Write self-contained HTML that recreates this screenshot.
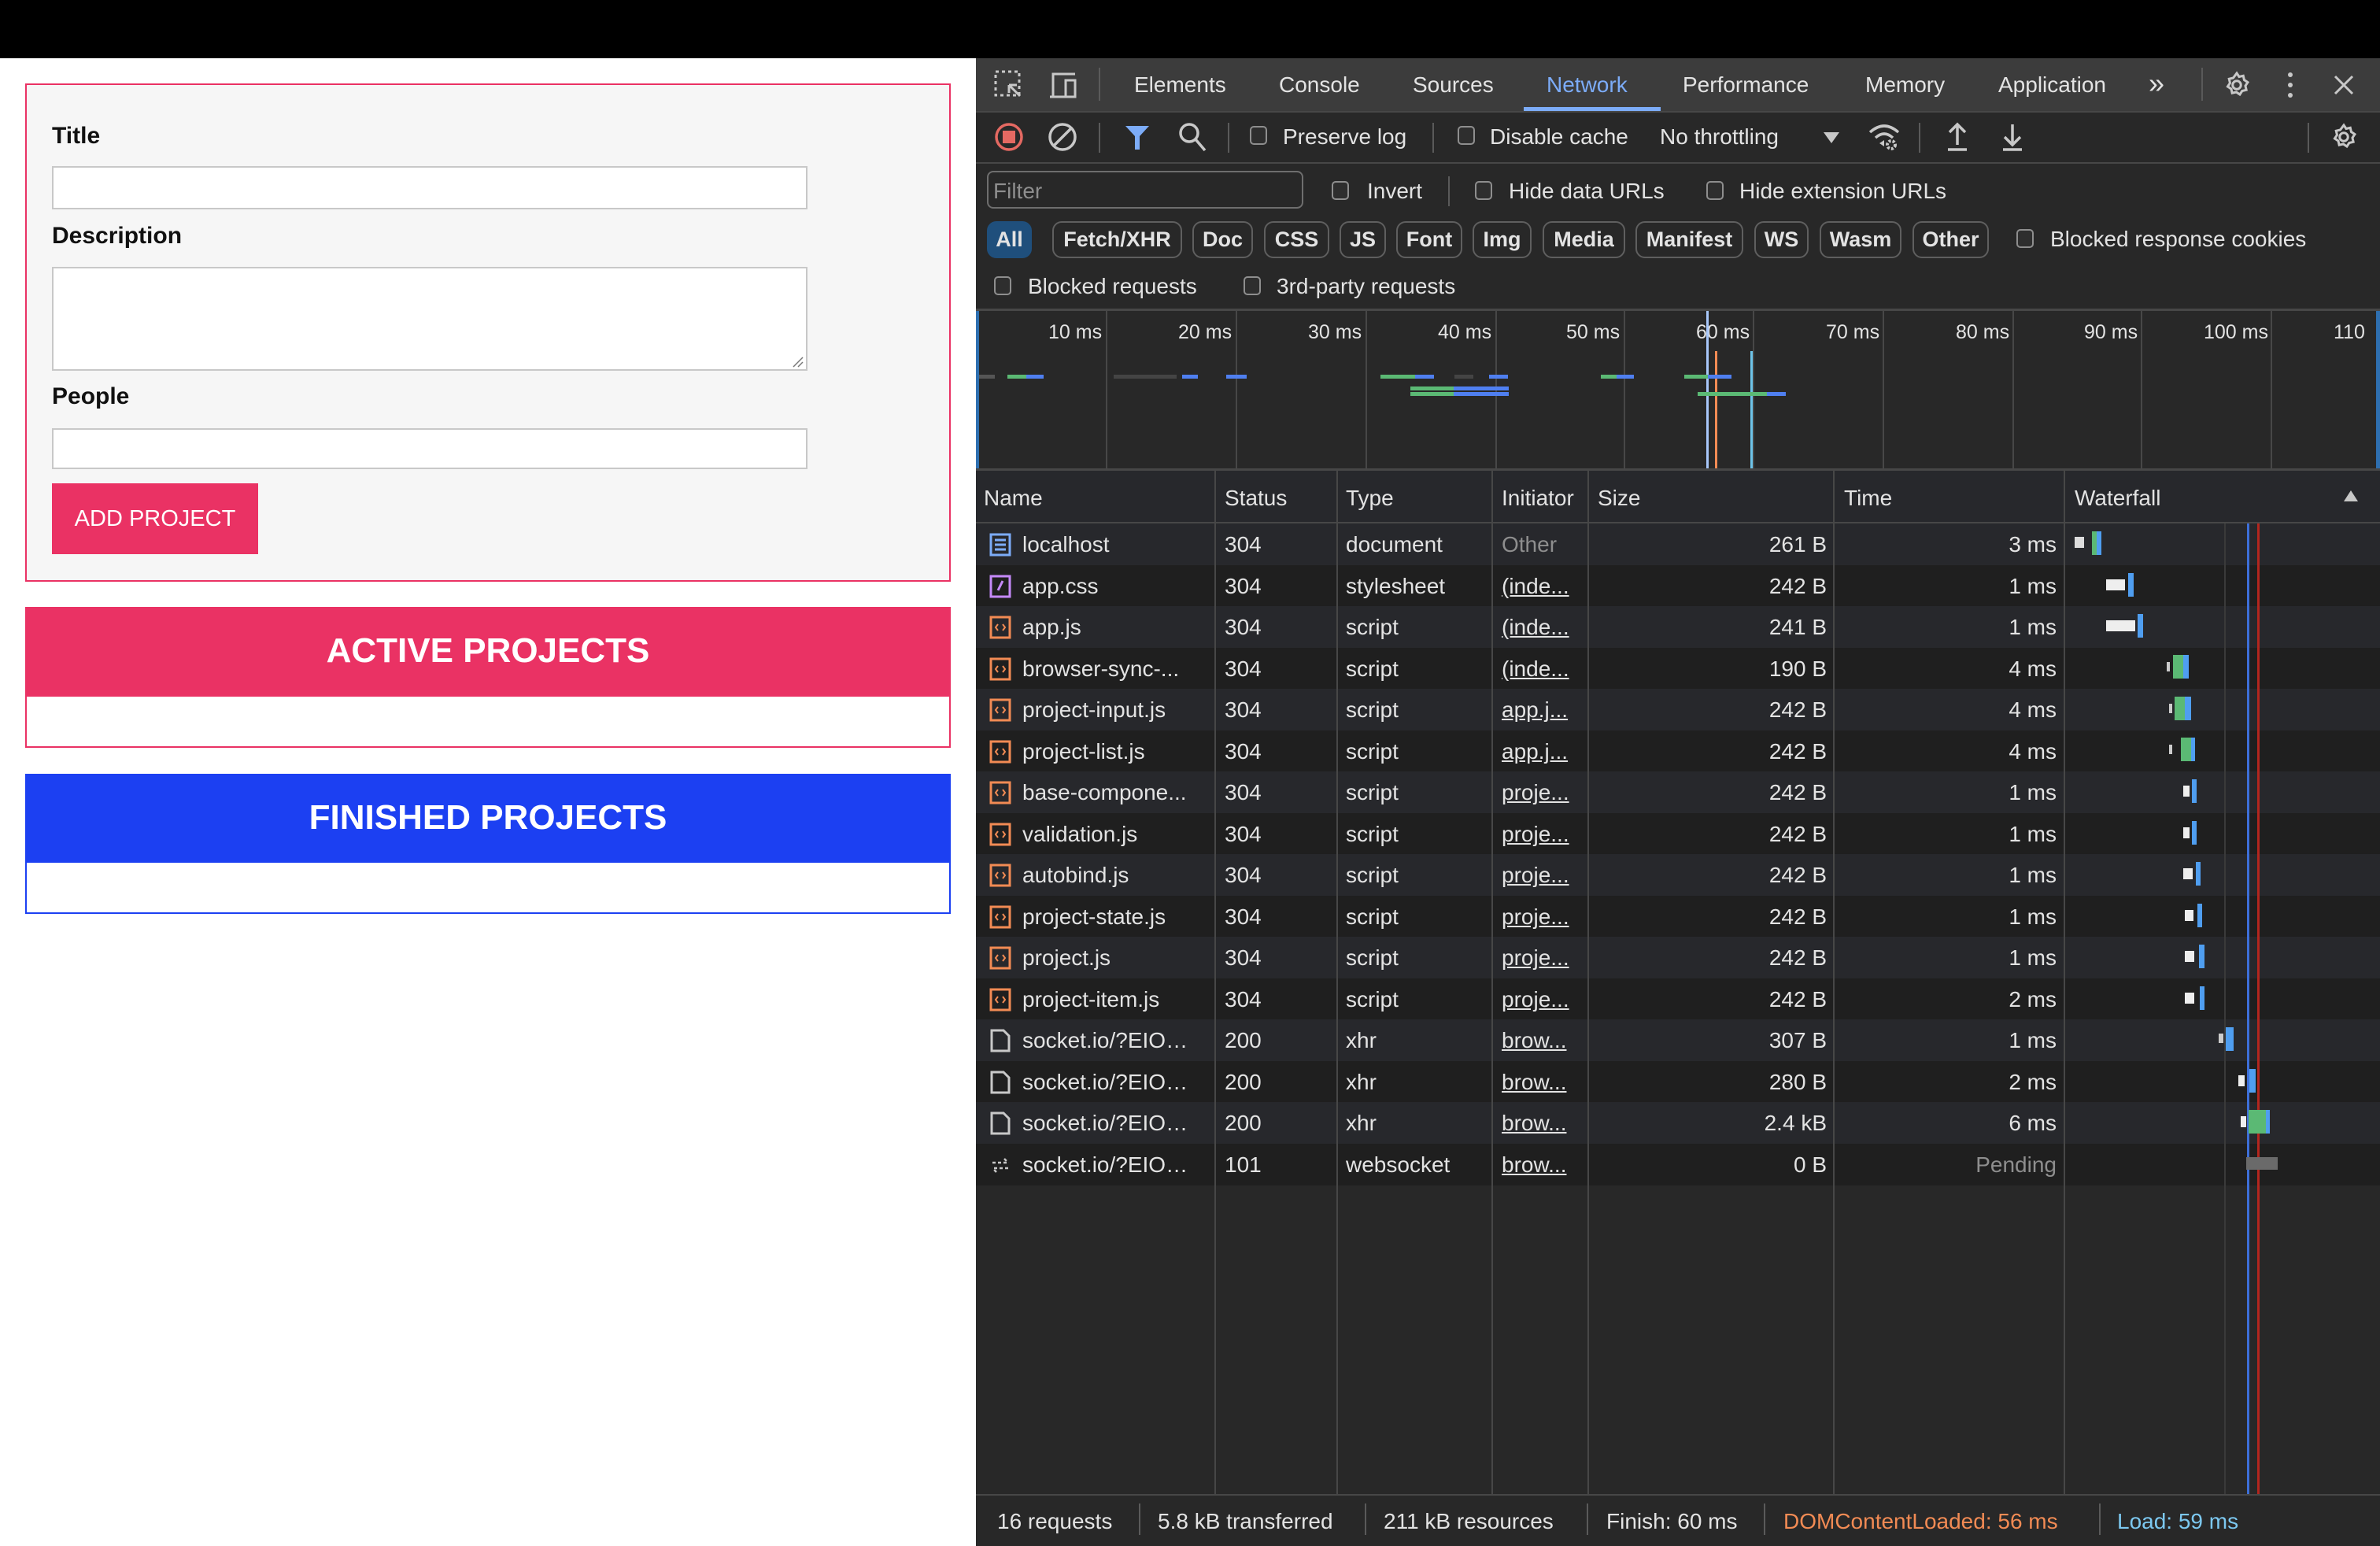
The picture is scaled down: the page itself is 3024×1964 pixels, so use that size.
<!DOCTYPE html>
<html><head><meta charset="utf-8"><style>
*{margin:0;padding:0;box-sizing:border-box}
body{width:3024px;height:1964px;position:relative;overflow:hidden;background:#fff;font-family:"Liberation Sans",Arial,sans-serif}
.a{position:absolute}
#top{left:0;top:0;width:3024px;height:74px;background:#000}
.lbl{position:absolute;left:66px;font-weight:bold;font-size:30px;color:#111;line-height:1}
.inp{position:absolute;left:66px;width:960px;background:#fff;border:2px solid #c8c8c8}
#dt{position:absolute;left:1240px;top:74px;width:1784px;height:1890px;background:#282828;color:#e3e3e3;font-size:28px;overflow:hidden}
.t{position:absolute;white-space:nowrap;line-height:1}
.cb{position:absolute;width:22px;height:24px;border:2px solid #8e8e8e;border-radius:5px;background:#2e2e2e}
.chip{position:absolute;top:207px;height:47px;border:2px solid #5f5f5f;border-radius:12px;font-size:27px;font-weight:bold;line-height:43px;text-align:center;color:#e3e3e3}
.vl{position:absolute;width:2px;background:#474747}
.row{position:absolute;left:0;width:1784px;height:53px}
.row .t{top:13px}
.ic{position:absolute;left:17px;top:12px}
.u{text-decoration:underline}
.bar{position:absolute}
</style></head><body>
<div id="top" class="a"></div>

<!-- left page -->
<div class="a" style="left:32px;top:106px;width:1176px;height:633px;background:#f6f6f6;border:2px solid #ea3264"></div>
<div class="lbl" style="top:158px">Title</div>
<div class="inp" style="top:211px;height:55px"></div>
<div class="lbl" style="top:285px">Description</div>
<div class="inp" style="top:339px;height:132px"></div>
<svg class="a" style="left:1004px;top:450px" width="18" height="18"><path d="M4 16L16 4M10 16L16 10" stroke="#777" stroke-width="1.5"/></svg>
<div class="lbl" style="top:489px">People</div>
<div class="inp" style="top:544px;height:52px"></div>
<div class="a" style="left:66px;top:614px;width:262px;height:90px;background:#ea3264;color:#fff;font-size:29px;line-height:90px;text-align:center">ADD PROJECT</div>

<div class="a" style="left:32px;top:771px;width:1176px;height:179px;border:2px solid #ea3264;background:#fff"></div>
<div class="a" style="left:32px;top:771px;width:1176px;height:114px;background:#ea3264;color:#fff;font-weight:bold;font-size:44px;line-height:112px;text-align:center">ACTIVE PROJECTS</div>
<div class="a" style="left:32px;top:983px;width:1176px;height:178px;border:2px solid #1c40f2;background:#fff"></div>
<div class="a" style="left:32px;top:983px;width:1176px;height:113px;background:#1c40f2;color:#fff;font-weight:bold;font-size:44px;line-height:111px;text-align:center">FINISHED PROJECTS</div>

<!-- devtools -->
<div id="dt">
 <div class="a" style="left:0;top:0;width:1784px;height:67px;background:#3c3c3c"></div>
 <svg class="a" style="left:22px;top:14px" width="40" height="40"><rect x="3" y="3" width="30" height="30" fill="none" stroke="#c8c8c8" stroke-width="3" stroke-dasharray="4 4"/><path d="M20 20L34 34M20 20h10M20 20v10" stroke="#c8c8c8" stroke-width="3" fill="none"/></svg>
 <svg class="a" style="left:90px;top:14px" width="42" height="40"><path d="M4 35h22M8 35V6h28" stroke="#c8c8c8" stroke-width="3" fill="none"/><rect x="24" y="14" width="12" height="21" fill="none" stroke="#c8c8c8" stroke-width="3"/></svg>
 <div class="a" style="left:156px;top:12px;width:2px;height:42px;background:#5a5a5a"></div>
 <div class="t" style="left:201px;top:20px">Elements</div>
 <div class="t" style="left:385px;top:20px">Console</div>
 <div class="t" style="left:555px;top:20px">Sources</div>
 <div class="t" style="left:725px;top:20px;color:#7cacf8">Network</div>
 <div class="a" style="left:696px;top:62px;width:174px;height:5px;background:#7cacf8"></div>
 <div class="t" style="left:898px;top:20px">Performance</div>
 <div class="t" style="left:1130px;top:20px">Memory</div>
 <div class="t" style="left:1299px;top:20px">Application</div>
 <div class="t" style="left:1490px;top:14px;font-size:36px">»</div>
 <div class="a" style="left:1557px;top:12px;width:2px;height:42px;background:#5a5a5a"></div>
 <svg class="a" style="left:1584px;top:16px" width="36" height="36" viewBox="0 0 24 24"><path d="M12 2l2 3 3.5-.8.8 3.5 3 2-2 3 .8 3.5-3.5.8-2 3-3-2-3.5.8-.8-3.5-3-2 2-3-.8-3.5 3.5-.8z" fill="none" stroke="#c8c8c8" stroke-width="2"/><circle cx="12" cy="12" r="3.5" fill="none" stroke="#c8c8c8" stroke-width="2"/></svg>
 <svg class="a" style="left:1664px;top:16px" width="12" height="36"><circle cx="6" cy="5" r="3" fill="#c8c8c8"/><circle cx="6" cy="18" r="3" fill="#c8c8c8"/><circle cx="6" cy="31" r="3" fill="#c8c8c8"/></svg>
 <svg class="a" style="left:1724px;top:20px" width="28" height="28"><path d="M3 3L25 25M25 3L3 25" stroke="#c8c8c8" stroke-width="3"/></svg>
 <div class="a" style="left:0;top:67px;width:1784px;height:2px;background:#474747"></div>

 <svg class="a" style="left:22px;top:80px" width="40" height="40"><circle cx="20" cy="20" r="16" fill="none" stroke="#e46962" stroke-width="3.5"/><rect x="12" y="12" width="16" height="16" fill="#e46962"/></svg>
 <svg class="a" style="left:90px;top:80px" width="40" height="40"><circle cx="20" cy="20" r="16" fill="none" stroke="#c8c8c8" stroke-width="3.5"/><path d="M9 31L31 9" stroke="#c8c8c8" stroke-width="3.5"/></svg>
 <div class="a" style="left:156px;top:82px;width:2px;height:38px;background:#5a5a5a"></div>
 <svg class="a" style="left:188px;top:82px" width="34" height="36"><path d="M2 4h30L20 17v17h-6V17z" fill="#7cacf8"/></svg>
 <svg class="a" style="left:256px;top:80px" width="38" height="40"><circle cx="15" cy="15" r="11" fill="none" stroke="#c8c8c8" stroke-width="3.5"/><path d="M23 23L35 37" stroke="#c8c8c8" stroke-width="3.5"/></svg>
 <div class="a" style="left:320px;top:82px;width:2px;height:38px;background:#5a5a5a"></div>
 <div class="cb" style="left:348px;top:86px"></div>
 <div class="t" style="left:390px;top:86px">Preserve log</div>
 <div class="a" style="left:580px;top:82px;width:2px;height:38px;background:#5a5a5a"></div>
 <div class="cb" style="left:612px;top:86px"></div>
 <div class="t" style="left:653px;top:86px">Disable cache</div>
 <div class="t" style="left:869px;top:86px">No throttling</div>
 <svg class="a" style="left:1076px;top:92px" width="22" height="18"><path d="M1 2h20L11 16z" fill="#c8c8c8"/></svg>
 <svg class="a" style="left:1132px;top:80px" width="44" height="40" viewBox="0 0 44 40"><path d="M4 14Q22 -2 40 14" stroke="#c8c8c8" stroke-width="3.5" fill="none"/><path d="M11 21Q22 11 33 21" stroke="#c8c8c8" stroke-width="3.5" fill="none"/><path d="M22 24l-6 4 6 4z" fill="#c8c8c8"/><circle cx="31" cy="30" r="5" fill="none" stroke="#c8c8c8" stroke-width="4" stroke-dasharray="3 2"/></svg>
 <div class="a" style="left:1198px;top:82px;width:2px;height:38px;background:#5a5a5a"></div>
 <svg class="a" style="left:1232px;top:80px" width="30" height="40"><path d="M15 30V4M5 14L15 4l10 10M3 36h24" stroke="#c8c8c8" stroke-width="3.5" fill="none"/></svg>
 <svg class="a" style="left:1302px;top:80px" width="30" height="40"><path d="M15 4v26M5 20l10 10 10-10M3 36h24" stroke="#c8c8c8" stroke-width="3.5" fill="none"/></svg>
 <div class="a" style="left:1692px;top:82px;width:2px;height:38px;background:#5a5a5a"></div>
 <svg class="a" style="left:1720px;top:82px" width="36" height="36" viewBox="0 0 24 24"><path d="M12 2l2 3 3.5-.8.8 3.5 3 2-2 3 .8 3.5-3.5.8-2 3-3-2-3.5.8-.8-3.5-3-2 2-3-.8-3.5 3.5-.8z" fill="none" stroke="#c8c8c8" stroke-width="2"/><circle cx="12" cy="12" r="3.5" fill="none" stroke="#c8c8c8" stroke-width="2"/></svg>
 <div class="a" style="left:0;top:132px;width:1784px;height:2px;background:#474747"></div>

 <div class="a" style="left:14px;top:143px;width:402px;height:48px;border:2px solid #6e6e6e;border-radius:8px"></div>
 <div class="t" style="left:22px;top:155px;color:#8e8e8e">Filter</div>
 <div class="cb" style="left:452px;top:156px"></div>
 <div class="t" style="left:497px;top:155px">Invert</div>
 <div class="a" style="left:600px;top:150px;width:2px;height:38px;background:#5a5a5a"></div>
 <div class="cb" style="left:634px;top:156px"></div>
 <div class="t" style="left:677px;top:155px">Hide data URLs</div>
 <div class="cb" style="left:928px;top:156px"></div>
 <div class="t" style="left:970px;top:155px">Hide extension URLs</div>

 <div class="chip" style="left:14px;width:57px;background:#1f4f7c;border-color:#1f4f7c">All</div>
 <div class="chip" style="left:97px;width:165px">Fetch/XHR</div>
 <div class="chip" style="left:275px;width:77px">Doc</div>
 <div class="chip" style="left:366px;width:83px">CSS</div>
 <div class="chip" style="left:462px;width:59px">JS</div>
 <div class="chip" style="left:534px;width:84px">Font</div>
 <div class="chip" style="left:631px;width:75px">Img</div>
 <div class="chip" style="left:720px;width:105px">Media</div>
 <div class="chip" style="left:838px;width:137px">Manifest</div>
 <div class="chip" style="left:989px;width:69px">WS</div>
 <div class="chip" style="left:1072px;width:104px">Wasm</div>
 <div class="chip" style="left:1190px;width:97px">Other</div>
 <div class="cb" style="left:1322px;top:217px"></div>
 <div class="t" style="left:1365px;top:216px">Blocked response cookies</div>
 <div class="cb" style="left:23px;top:277px"></div>
 <div class="t" style="left:66px;top:276px">Blocked requests</div>
 <div class="cb" style="left:340px;top:277px"></div>
 <div class="t" style="left:382px;top:276px">3rd-party requests</div>
 <div class="a" style="left:0;top:318px;width:1784px;height:3px;background:#474747"></div>

 <div class="a" style="left:0;top:321px;width:1784px;height:200px;background:#282828"></div>
 <div class="vl" style="left:165px;top:321px;height:200px"></div>
 <div class="vl" style="left:330px;top:321px;height:200px"></div>
 <div class="vl" style="left:495px;top:321px;height:200px"></div>
 <div class="vl" style="left:660px;top:321px;height:200px"></div>
 <div class="vl" style="left:823px;top:321px;height:200px"></div>
 <div class="vl" style="left:987px;top:321px;height:200px"></div>
 <div class="vl" style="left:1152px;top:321px;height:200px"></div>
 <div class="vl" style="left:1317px;top:321px;height:200px"></div>
 <div class="vl" style="left:1480px;top:321px;height:200px"></div>
 <div class="vl" style="left:1645px;top:321px;height:200px"></div>
 <div class="a" style="left:0;top:321px;width:4px;height:200px;background:#2e6fb0"></div>
 <div class="a" style="left:1779px;top:321px;width:5px;height:200px;background:#2e6fb0"></div>
 <div class="t" style="left:92px;top:336px;font-size:25px">10 ms</div>
 <div class="t" style="left:257px;top:336px;font-size:25px">20 ms</div>
 <div class="t" style="left:422px;top:336px;font-size:25px">30 ms</div>
 <div class="t" style="left:587px;top:336px;font-size:25px">40 ms</div>
 <div class="t" style="left:750px;top:336px;font-size:25px">50 ms</div>
 <div class="t" style="left:915px;top:336px;font-size:25px">60 ms</div>
 <div class="t" style="left:1080px;top:336px;font-size:25px">70 ms</div>
 <div class="t" style="left:1245px;top:336px;font-size:25px">80 ms</div>
 <div class="t" style="left:1408px;top:336px;font-size:25px">90 ms</div>
 <div class="t" style="left:1560px;top:336px;font-size:25px">100 ms</div>
 <div class="t" style="left:1725px;top:336px;font-size:25px">110</div>
 <div class="a" style="left:928px;top:321px;width:3px;height:200px;background:#a8c7fa"></div>
 <div class="a" style="left:939px;top:372px;width:3px;height:149px;background:#f28b54"></div>
 <div class="a" style="left:984px;top:372px;width:3px;height:149px;background:#6ec5ea"></div>
 <div class="bar" style="left:4px;top:402px;width:20px;height:5px;background:#555"></div>
 <div class="bar" style="left:40px;top:402px;width:24px;height:5px;background:#5bb974"></div>
 <div class="bar" style="left:64px;top:402px;width:22px;height:5px;background:#4f7ff0"></div>
 <div class="bar" style="left:175px;top:402px;width:80px;height:5px;background:#444"></div>
 <div class="bar" style="left:262px;top:402px;width:20px;height:5px;background:#4f7ff0"></div>
 <div class="bar" style="left:318px;top:402px;width:26px;height:5px;background:#4f7ff0"></div>
 <div class="bar" style="left:514px;top:402px;width:44px;height:5px;background:#5bb974"></div>
 <div class="bar" style="left:558px;top:402px;width:24px;height:5px;background:#4f7ff0"></div>
 <div class="bar" style="left:608px;top:402px;width:24px;height:5px;background:#444"></div>
 <div class="bar" style="left:652px;top:402px;width:24px;height:5px;background:#4f7ff0"></div>
 <div class="bar" style="left:552px;top:417px;width:55px;height:5px;background:#5bb974"></div>
 <div class="bar" style="left:607px;top:417px;width:70px;height:5px;background:#4f7ff0"></div>
 <div class="bar" style="left:552px;top:424px;width:55px;height:5px;background:#5bb974"></div>
 <div class="bar" style="left:607px;top:424px;width:70px;height:5px;background:#4f7ff0"></div>
 <div class="bar" style="left:794px;top:402px;width:20px;height:5px;background:#5bb974"></div>
 <div class="bar" style="left:814px;top:402px;width:22px;height:5px;background:#4f7ff0"></div>
 <div class="bar" style="left:900px;top:402px;width:30px;height:5px;background:#5bb974"></div>
 <div class="bar" style="left:930px;top:402px;width:30px;height:5px;background:#4f7ff0"></div>
 <div class="bar" style="left:917px;top:424px;width:88px;height:5px;background:#5bb974"></div>
 <div class="bar" style="left:1005px;top:424px;width:24px;height:5px;background:#4f7ff0"></div>
 <div class="a" style="left:0;top:521px;width:1784px;height:3px;background:#474747"></div>

 <div class="a" style="left:0;top:524px;width:1784px;height:67px;background:#27282c"></div>
 <div class="t" style="left:10px;top:545px">Name</div>
 <div class="t" style="left:316px;top:545px">Status</div>
 <div class="t" style="left:470px;top:545px">Type</div>
 <div class="t" style="left:668px;top:545px">Initiator</div>
 <div class="t" style="left:790px;top:545px">Size</div>
 <div class="t" style="left:1103px;top:545px">Time</div>
 <div class="t" style="left:1396px;top:545px">Waterfall</div>
 <svg class="a" style="left:1737px;top:548px" width="20" height="16"><path d="M1 15h18L10 1z" fill="#c8c8c8"/></svg>
 <div class="a" style="left:0;top:589px;width:1784px;height:2px;background:#474747"></div>

 <div id="rows" class="a" style="left:0;top:591px;width:1784px;height:1233px;background:#282828">
 <div class="row" style="top:0;background:#27282c"><svg class="ic" width="28" height="30"><rect x="2" y="2" width="24" height="26" fill="none" stroke="#7cacf8" stroke-width="3"/><path d="M7 9h14M7 15h14M7 21h14" stroke="#7cacf8" stroke-width="3"/></svg><span class="t" style="left:59px">localhost</span><span class="t" style="left:316px">304</span><span class="t" style="left:470px">document</span><span class="t" style="left:668px;color:#8e8e8e">Other</span><span class="t" style="right:703px">261 B</span><span class="t" style="right:411px">3 ms</span></div>
 <div class="row" style="top:52.5px;background:#1f1f1f"><svg class="ic" width="28" height="30"><rect x="2" y="2" width="24" height="26" fill="none" stroke="#c58af9" stroke-width="3"/><path d="M11 20l6-12" stroke="#c58af9" stroke-width="3"/></svg><span class="t" style="left:59px">app.css</span><span class="t" style="left:316px">304</span><span class="t" style="left:470px">stylesheet</span><span class="t u" style="left:668px">(inde...</span><span class="t" style="right:703px">242 B</span><span class="t" style="right:411px">1 ms</span></div>
 <div class="row" style="top:105px;background:#27282c"><svg class="ic" width="28" height="30"><rect x="2" y="2" width="24" height="26" fill="none" stroke="#f28b54" stroke-width="3"/><path d="M11 11l-3 4 3 4M17 11l3 4-3 4" stroke="#f28b54" stroke-width="2" fill="none"/></svg><span class="t" style="left:59px">app.js</span><span class="t" style="left:316px">304</span><span class="t" style="left:470px">script</span><span class="t u" style="left:668px">(inde...</span><span class="t" style="right:703px">241 B</span><span class="t" style="right:411px">1 ms</span></div>
 <div class="row" style="top:157.5px;background:#1f1f1f"><svg class="ic" width="28" height="30"><rect x="2" y="2" width="24" height="26" fill="none" stroke="#f28b54" stroke-width="3"/><path d="M11 11l-3 4 3 4M17 11l3 4-3 4" stroke="#f28b54" stroke-width="2" fill="none"/></svg><span class="t" style="left:59px">browser-sync-...</span><span class="t" style="left:316px">304</span><span class="t" style="left:470px">script</span><span class="t u" style="left:668px">(inde...</span><span class="t" style="right:703px">190 B</span><span class="t" style="right:411px">4 ms</span></div>
 <div class="row" style="top:210px;background:#27282c"><svg class="ic" width="28" height="30"><rect x="2" y="2" width="24" height="26" fill="none" stroke="#f28b54" stroke-width="3"/><path d="M11 11l-3 4 3 4M17 11l3 4-3 4" stroke="#f28b54" stroke-width="2" fill="none"/></svg><span class="t" style="left:59px">project-input.js</span><span class="t" style="left:316px">304</span><span class="t" style="left:470px">script</span><span class="t u" style="left:668px">app.j...</span><span class="t" style="right:703px">242 B</span><span class="t" style="right:411px">4 ms</span></div>
 <div class="row" style="top:262.5px;background:#1f1f1f"><svg class="ic" width="28" height="30"><rect x="2" y="2" width="24" height="26" fill="none" stroke="#f28b54" stroke-width="3"/><path d="M11 11l-3 4 3 4M17 11l3 4-3 4" stroke="#f28b54" stroke-width="2" fill="none"/></svg><span class="t" style="left:59px">project-list.js</span><span class="t" style="left:316px">304</span><span class="t" style="left:470px">script</span><span class="t u" style="left:668px">app.j...</span><span class="t" style="right:703px">242 B</span><span class="t" style="right:411px">4 ms</span></div>
 <div class="row" style="top:315px;background:#27282c"><svg class="ic" width="28" height="30"><rect x="2" y="2" width="24" height="26" fill="none" stroke="#f28b54" stroke-width="3"/><path d="M11 11l-3 4 3 4M17 11l3 4-3 4" stroke="#f28b54" stroke-width="2" fill="none"/></svg><span class="t" style="left:59px">base-compone...</span><span class="t" style="left:316px">304</span><span class="t" style="left:470px">script</span><span class="t u" style="left:668px">proje...</span><span class="t" style="right:703px">242 B</span><span class="t" style="right:411px">1 ms</span></div>
 <div class="row" style="top:367.5px;background:#1f1f1f"><svg class="ic" width="28" height="30"><rect x="2" y="2" width="24" height="26" fill="none" stroke="#f28b54" stroke-width="3"/><path d="M11 11l-3 4 3 4M17 11l3 4-3 4" stroke="#f28b54" stroke-width="2" fill="none"/></svg><span class="t" style="left:59px">validation.js</span><span class="t" style="left:316px">304</span><span class="t" style="left:470px">script</span><span class="t u" style="left:668px">proje...</span><span class="t" style="right:703px">242 B</span><span class="t" style="right:411px">1 ms</span></div>
 <div class="row" style="top:420px;background:#27282c"><svg class="ic" width="28" height="30"><rect x="2" y="2" width="24" height="26" fill="none" stroke="#f28b54" stroke-width="3"/><path d="M11 11l-3 4 3 4M17 11l3 4-3 4" stroke="#f28b54" stroke-width="2" fill="none"/></svg><span class="t" style="left:59px">autobind.js</span><span class="t" style="left:316px">304</span><span class="t" style="left:470px">script</span><span class="t u" style="left:668px">proje...</span><span class="t" style="right:703px">242 B</span><span class="t" style="right:411px">1 ms</span></div>
 <div class="row" style="top:472.5px;background:#1f1f1f"><svg class="ic" width="28" height="30"><rect x="2" y="2" width="24" height="26" fill="none" stroke="#f28b54" stroke-width="3"/><path d="M11 11l-3 4 3 4M17 11l3 4-3 4" stroke="#f28b54" stroke-width="2" fill="none"/></svg><span class="t" style="left:59px">project-state.js</span><span class="t" style="left:316px">304</span><span class="t" style="left:470px">script</span><span class="t u" style="left:668px">proje...</span><span class="t" style="right:703px">242 B</span><span class="t" style="right:411px">1 ms</span></div>
 <div class="row" style="top:525px;background:#27282c"><svg class="ic" width="28" height="30"><rect x="2" y="2" width="24" height="26" fill="none" stroke="#f28b54" stroke-width="3"/><path d="M11 11l-3 4 3 4M17 11l3 4-3 4" stroke="#f28b54" stroke-width="2" fill="none"/></svg><span class="t" style="left:59px">project.js</span><span class="t" style="left:316px">304</span><span class="t" style="left:470px">script</span><span class="t u" style="left:668px">proje...</span><span class="t" style="right:703px">242 B</span><span class="t" style="right:411px">1 ms</span></div>
 <div class="row" style="top:577.5px;background:#1f1f1f"><svg class="ic" width="28" height="30"><rect x="2" y="2" width="24" height="26" fill="none" stroke="#f28b54" stroke-width="3"/><path d="M11 11l-3 4 3 4M17 11l3 4-3 4" stroke="#f28b54" stroke-width="2" fill="none"/></svg><span class="t" style="left:59px">project-item.js</span><span class="t" style="left:316px">304</span><span class="t" style="left:470px">script</span><span class="t u" style="left:668px">proje...</span><span class="t" style="right:703px">242 B</span><span class="t" style="right:411px">2 ms</span></div>
 <div class="row" style="top:630px;background:#27282c"><svg class="ic" width="28" height="30"><path d="M3 2h15l7 7v19H3z" fill="none" stroke="#c8c8c8" stroke-width="3"/></svg><span class="t" style="left:59px">socket.io/?EIO…</span><span class="t" style="left:316px">200</span><span class="t" style="left:470px">xhr</span><span class="t u" style="left:668px">brow...</span><span class="t" style="right:703px">307 B</span><span class="t" style="right:411px">1 ms</span></div>
 <div class="row" style="top:682.5px;background:#1f1f1f"><svg class="ic" width="28" height="30"><path d="M3 2h15l7 7v19H3z" fill="none" stroke="#c8c8c8" stroke-width="3"/></svg><span class="t" style="left:59px">socket.io/?EIO…</span><span class="t" style="left:316px">200</span><span class="t" style="left:470px">xhr</span><span class="t u" style="left:668px">brow...</span><span class="t" style="right:703px">280 B</span><span class="t" style="right:411px">2 ms</span></div>
 <div class="row" style="top:735px;background:#27282c"><svg class="ic" width="28" height="30"><path d="M3 2h15l7 7v19H3z" fill="none" stroke="#c8c8c8" stroke-width="3"/></svg><span class="t" style="left:59px">socket.io/?EIO…</span><span class="t" style="left:316px">200</span><span class="t" style="left:470px">xhr</span><span class="t u" style="left:668px">brow...</span><span class="t" style="right:703px">2.4 kB</span><span class="t" style="right:411px">6 ms</span></div>
 <div class="row" style="top:787.5px;background:#1f1f1f"><svg class="ic" width="28" height="30"><path d="M4 12h20M19 7l5 5M24 19H4M9 24l-5-5" stroke="#c8c8c8" stroke-width="2.5" fill="none" stroke-dasharray="4 3"/></svg><span class="t" style="left:59px">socket.io/?EIO…</span><span class="t" style="left:316px">101</span><span class="t" style="left:470px">websocket</span><span class="t u" style="left:668px">brow...</span><span class="t" style="right:703px">0 B</span><span class="t" style="right:411px;color:#8e8e8e">Pending</span></div>
 </div>

 <div class="vl" style="left:303px;top:524px;height:1300px"></div>
 <div class="vl" style="left:458px;top:524px;height:1300px"></div>
 <div class="vl" style="left:655px;top:524px;height:1300px"></div>
 <div class="vl" style="left:777px;top:524px;height:1300px"></div>
 <div class="vl" style="left:1089px;top:524px;height:1300px"></div>
 <div class="vl" style="left:1382px;top:524px;height:1300px"></div>
 <div class="a" style="left:1586px;top:591px;width:2px;height:1233px;background:#3a3a3a"></div>
 <div class="a" style="left:1615px;top:591px;width:3px;height:1233px;background:#3d6fd9"></div>
 <div class="a" style="left:1628px;top:591px;width:3px;height:1233px;background:#b3261e"></div>

 <div class="bar" style="left:1396px;top:608px;width:12px;height:14px;background:#ddd"></div>
 <div class="bar" style="left:1418px;top:601px;width:6px;height:30px;background:#5bb974"></div>
 <div class="bar" style="left:1424px;top:601px;width:6px;height:30px;background:#4f9ef0"></div>
 <div class="bar" style="left:1436px;top:662px;width:24px;height:14px;background:#eee"></div>
 <div class="bar" style="left:1464px;top:654px;width:7px;height:30px;background:#4f9ef0"></div>
 <div class="bar" style="left:1436px;top:714px;width:37px;height:14px;background:#eee"></div>
 <div class="bar" style="left:1476px;top:706px;width:7px;height:30px;background:#4f9ef0"></div>
 <div class="bar" style="left:1513px;top:767px;width:4px;height:12px;background:#ccc"></div>
 <div class="bar" style="left:1521px;top:758px;width:13px;height:30px;background:#5bb974"></div>
 <div class="bar" style="left:1534px;top:758px;width:7px;height:30px;background:#4f9ef0"></div>
 <div class="bar" style="left:1516px;top:820px;width:4px;height:12px;background:#ccc"></div>
 <div class="bar" style="left:1523px;top:811px;width:13px;height:30px;background:#5bb974"></div>
 <div class="bar" style="left:1536px;top:811px;width:8px;height:30px;background:#4f9ef0"></div>
 <div class="bar" style="left:1516px;top:872px;width:4px;height:12px;background:#ccc"></div>
 <div class="bar" style="left:1531px;top:863px;width:13px;height:30px;background:#5bb974"></div>
 <div class="bar" style="left:1544px;top:863px;width:5px;height:30px;background:#4f9ef0"></div>
 <div class="bar" style="left:1534px;top:924px;width:8px;height:14px;background:#eee"></div>
 <div class="bar" style="left:1545px;top:916px;width:6px;height:30px;background:#4f9ef0"></div>
 <div class="bar" style="left:1534px;top:977px;width:8px;height:14px;background:#eee"></div>
 <div class="bar" style="left:1545px;top:969px;width:6px;height:30px;background:#4f9ef0"></div>
 <div class="bar" style="left:1534px;top:1029px;width:12px;height:14px;background:#eee"></div>
 <div class="bar" style="left:1550px;top:1021px;width:6px;height:30px;background:#4f9ef0"></div>
 <div class="bar" style="left:1536px;top:1082px;width:11px;height:14px;background:#eee"></div>
 <div class="bar" style="left:1552px;top:1074px;width:6px;height:30px;background:#4f9ef0"></div>
 <div class="bar" style="left:1536px;top:1134px;width:12px;height:14px;background:#eee"></div>
 <div class="bar" style="left:1554px;top:1126px;width:7px;height:30px;background:#4f9ef0"></div>
 <div class="bar" style="left:1536px;top:1187px;width:12px;height:14px;background:#eee"></div>
 <div class="bar" style="left:1555px;top:1179px;width:6px;height:30px;background:#4f9ef0"></div>
 <div class="bar" style="left:1579px;top:1239px;width:6px;height:12px;background:#ccc"></div>
 <div class="bar" style="left:1588px;top:1231px;width:10px;height:30px;background:#4f9ef0"></div>
 <div class="bar" style="left:1604px;top:1292px;width:8px;height:14px;background:#eee"></div>
 <div class="bar" style="left:1618px;top:1284px;width:8px;height:30px;background:#4f9ef0"></div>
 <div class="bar" style="left:1607px;top:1344px;width:7px;height:14px;background:#eee"></div>
 <div class="bar" style="left:1617px;top:1336px;width:22px;height:30px;background:#5bb974"></div>
 <div class="bar" style="left:1639px;top:1336px;width:5px;height:30px;background:#4f9ef0"></div>
 <div class="bar" style="left:1614px;top:1396px;width:40px;height:16px;background:#6a6a6a"></div>

 <div class="a" style="left:0;top:1824px;width:1784px;height:2px;background:#474747"></div>
 <div class="a" style="left:0;top:1826px;width:1784px;height:64px;background:#282828"></div>
 <div class="t" style="left:27px;top:1845px">16 requests</div>
 <div class="vl" style="left:207px;top:1836px;height:40px;background:#5a5a5a"></div>
 <div class="t" style="left:231px;top:1845px">5.8 kB transferred</div>
 <div class="vl" style="left:494px;top:1836px;height:40px;background:#5a5a5a"></div>
 <div class="t" style="left:518px;top:1845px">211 kB resources</div>
 <div class="vl" style="left:776px;top:1836px;height:40px;background:#5a5a5a"></div>
 <div class="t" style="left:801px;top:1845px">Finish: 60 ms</div>
 <div class="vl" style="left:1001px;top:1836px;height:40px;background:#5a5a5a"></div>
 <div class="t" style="left:1026px;top:1845px;color:#f28b54">DOMContentLoaded: 56 ms</div>
 <div class="vl" style="left:1427px;top:1836px;height:40px;background:#5a5a5a"></div>
 <div class="t" style="left:1450px;top:1845px;color:#7cc8f0">Load: 59 ms</div>
</div>
</body></html>
